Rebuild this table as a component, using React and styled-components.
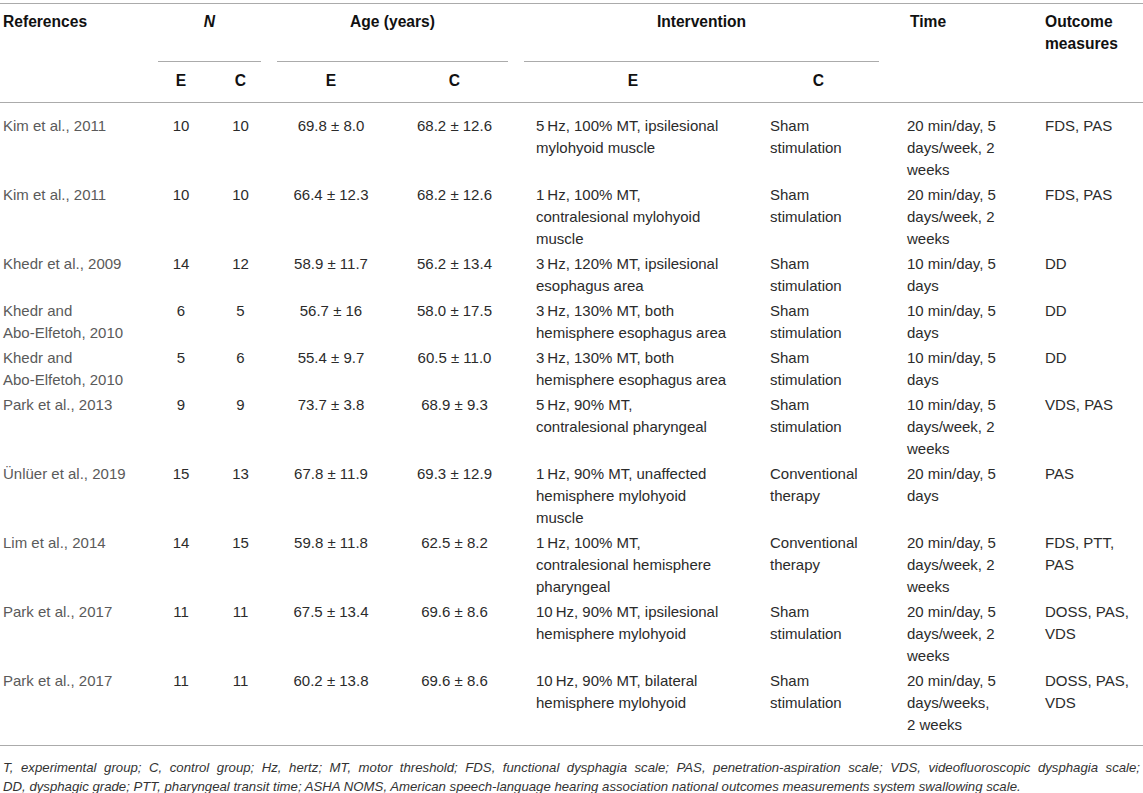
import React from "react";
import styled, { createGlobalStyle } from "styled-components";

const Global = createGlobalStyle`
  html, body { margin: 0; padding: 0; background: #fff; }
  body { font-family: "Liberation Sans", Arial, Helvetica, sans-serif; }
`;

const COLS = "150px 62px 57px 124px 123px 234px 137px 138px 118px";
const RULE = "#ababab";

const Page = styled.div`
  width: 1143px;
  padding-top: 3px;
`;

const Table = styled.div`
  border-top: 1px solid ${RULE};
`;

const Head = styled.div`
  display: grid;
  grid-template-columns: ${COLS};
  grid-template-rows: auto auto;
  border-bottom: 1px solid ${RULE};
  font-weight: 700;
  font-size: 15.6px;
  line-height: 22px;
  color: #111;
`;

const HeadCell = styled.div`
  grid-column: ${(p) => p.$col};
  grid-row: 1 / span 2;
  padding: 7px 0 0 ${(p) => p.$pad || 20}px;
`;

const Group = styled.div`
  grid-column: ${(p) => p.$col};
  grid-row: 1;
  padding: 7px 8px 0;
`;

const GroupLabel = styled.div`
  text-align: center;
  padding-bottom: 28px;
  border-bottom: 1px solid ${RULE};
`;

const Sub = styled.div`
  grid-column: ${(p) => p.$col};
  grid-row: 2;
  text-align: center;
  padding: 8px 0 10px;
`;

const Body = styled.div`
  padding: 10.5px 0 7.5px;
  border-bottom: 1px solid ${RULE};
`;

const Row = styled.div`
  display: grid;
  grid-template-columns: ${COLS};
  font-size: 15px;
  line-height: 22px;
  color: #2b2b2b;
`;

const Cell = styled.div`
  padding: 1.5px ${(p) => (p.$center ? 0 : 4)}px 1.5px
    ${(p) => (p.$center ? 0 : p.$pad ?? 20)}px;
  text-align: ${(p) => (p.$center ? "center" : "left")};
  color: ${(p) => (p.$muted ? "#5a5a5a" : "inherit")};
`;

const Line = styled.span`
  display: block;
  white-space: nowrap;
`;

const Note = styled.div`
  padding: 12px 3px 0 3px;
  font-style: italic;
  font-size: 13.2px;
  line-height: 19px;
  color: #333;
`;

const NoteLine = styled.span`
  display: block;
  white-space: nowrap;
  text-align: ${(p) => (p.$justify ? "justify" : "left")};
  text-align-last: ${(p) => (p.$justify ? "justify" : "auto")};
`;

const T = "\u2009";

const rows = [
  {
    ref: ["Kim et al., 2011"], ne: "10", nc: "10", ae: "69.8 ± 8.0", ac: "68.2 ± 12.6",
    ie: [`5${T}Hz, 100% MT, ipsilesional`, "mylohyoid muscle"],
    ic: ["Sham", "stimulation"],
    time: ["20 min/day, 5", "days/week, 2", "weeks"],
    out: ["FDS, PAS"],
  },
  {
    ref: ["Kim et al., 2011"], ne: "10", nc: "10", ae: "66.4 ± 12.3", ac: "68.2 ± 12.6",
    ie: [`1${T}Hz, 100% MT,`, "contralesional mylohyoid", "muscle"],
    ic: ["Sham", "stimulation"],
    time: ["20 min/day, 5", "days/week, 2", "weeks"],
    out: ["FDS, PAS"],
  },
  {
    ref: ["Khedr et al., 2009"], ne: "14", nc: "12", ae: "58.9 ± 11.7", ac: "56.2 ± 13.4",
    ie: [`3${T}Hz, 120% MT, ipsilesional`, "esophagus area"],
    ic: ["Sham", "stimulation"],
    time: ["10 min/day, 5", "days"],
    out: ["DD"],
  },
  {
    ref: ["Khedr and", "Abo-Elfetoh, 2010"], ne: "6", nc: "5", ae: "56.7 ± 16", ac: "58.0 ± 17.5",
    ie: [`3${T}Hz, 130% MT, both`, "hemisphere esophagus area"],
    ic: ["Sham", "stimulation"],
    time: ["10 min/day, 5", "days"],
    out: ["DD"],
  },
  {
    ref: ["Khedr and", "Abo-Elfetoh, 2010"], ne: "5", nc: "6", ae: "55.4 ± 9.7", ac: "60.5 ± 11.0",
    ie: [`3${T}Hz, 130% MT, both`, "hemisphere esophagus area"],
    ic: ["Sham", "stimulation"],
    time: ["10 min/day, 5", "days"],
    out: ["DD"],
  },
  {
    ref: ["Park et al., 2013"], ne: "9", nc: "9", ae: "73.7 ± 3.8", ac: "68.9 ± 9.3",
    ie: [`5${T}Hz, 90% MT,`, "contralesional pharyngeal"],
    ic: ["Sham", "stimulation"],
    time: ["10 min/day, 5", "days/week, 2", "weeks"],
    out: ["VDS, PAS"],
  },
  {
    ref: ["Ünlüer et al., 2019"], ne: "15", nc: "13", ae: "67.8 ± 11.9", ac: "69.3 ± 12.9",
    ie: [`1${T}Hz, 90% MT, unaffected`, "hemisphere mylohyoid", "muscle"],
    ic: ["Conventional", "therapy"],
    time: ["20 min/day, 5", "days"],
    out: ["PAS"],
  },
  {
    ref: ["Lim et al., 2014"], ne: "14", nc: "15", ae: "59.8 ± 11.8", ac: "62.5 ± 8.2",
    ie: [`1${T}Hz, 100% MT,`, "contralesional hemisphere", "pharyngeal"],
    ic: ["Conventional", "therapy"],
    time: ["20 min/day, 5", "days/week, 2", "weeks"],
    out: ["FDS, PTT,", "PAS"],
  },
  {
    ref: ["Park et al., 2017"], ne: "11", nc: "11", ae: "67.5 ± 13.4", ac: "69.6 ± 8.6",
    ie: [`10${T}Hz, 90% MT, ipsilesional`, "hemisphere mylohyoid"],
    ic: ["Sham", "stimulation"],
    time: ["20 min/day, 5", "days/week, 2", "weeks"],
    out: ["DOSS, PAS,", "VDS"],
  },
  {
    ref: ["Park et al., 2017"], ne: "11", nc: "11", ae: "60.2 ± 13.8", ac: "69.6 ± 8.6",
    ie: [`10${T}Hz, 90% MT, bilateral`, "hemisphere mylohyoid"],
    ic: ["Sham", "stimulation"],
    time: ["20 min/day, 5", "days/weeks,", "2 weeks"],
    out: ["DOSS, PAS,", "VDS"],
  },
];

const Lines = ({ items }) => items.map((t, i) => <Line key={i}>{t}</Line>);

export default function App() {
  return (
    <Page>
      <Global />
      <Table>
        <Head>
          <HeadCell $col="1" $pad={3}>References</HeadCell>
          <Group $col="2 / span 2">
            <GroupLabel><i>N</i></GroupLabel>
          </Group>
          <Group $col="4 / span 2">
            <GroupLabel>Age (years)</GroupLabel>
          </Group>
          <Group $col="6 / span 2">
            <GroupLabel>Intervention</GroupLabel>
          </Group>
          <HeadCell $col="8" $pad={23}>Time</HeadCell>
          <HeadCell $col="9">
            <Line>Outcome</Line>
            <Line>measures</Line>
          </HeadCell>
          <Sub $col="2">E</Sub>
          <Sub $col="3">C</Sub>
          <Sub $col="4">E</Sub>
          <Sub $col="5">C</Sub>
          <Sub $col="6">E</Sub>
          <Sub $col="7">C</Sub>
        </Head>
        <Body>
          {rows.map((r, i) => (
            <Row key={i}>
              <Cell $pad={3} $muted><Lines items={r.ref} /></Cell>
              <Cell $center>{r.ne}</Cell>
              <Cell $center>{r.nc}</Cell>
              <Cell $center>{r.ae}</Cell>
              <Cell $center>{r.ac}</Cell>
              <Cell><Lines items={r.ie} /></Cell>
              <Cell><Lines items={r.ic} /></Cell>
              <Cell><Lines items={r.time} /></Cell>
              <Cell><Lines items={r.out} /></Cell>
            </Row>
          ))}
        </Body>
      </Table>
      <Note>
        <NoteLine $justify>
          T, experimental group; C, control group; Hz, hertz; MT, motor threshold; FDS, functional dysphagia scale; PAS, penetration-aspiration scale; VDS, videofluoroscopic dysphagia scale;
        </NoteLine>
        <NoteLine>
          DD, dysphagic grade; PTT, pharyngeal transit time; ASHA NOMS, American speech-language hearing association national outcomes measurements system swallowing scale.
        </NoteLine>
      </Note>
    </Page>
  );
}
